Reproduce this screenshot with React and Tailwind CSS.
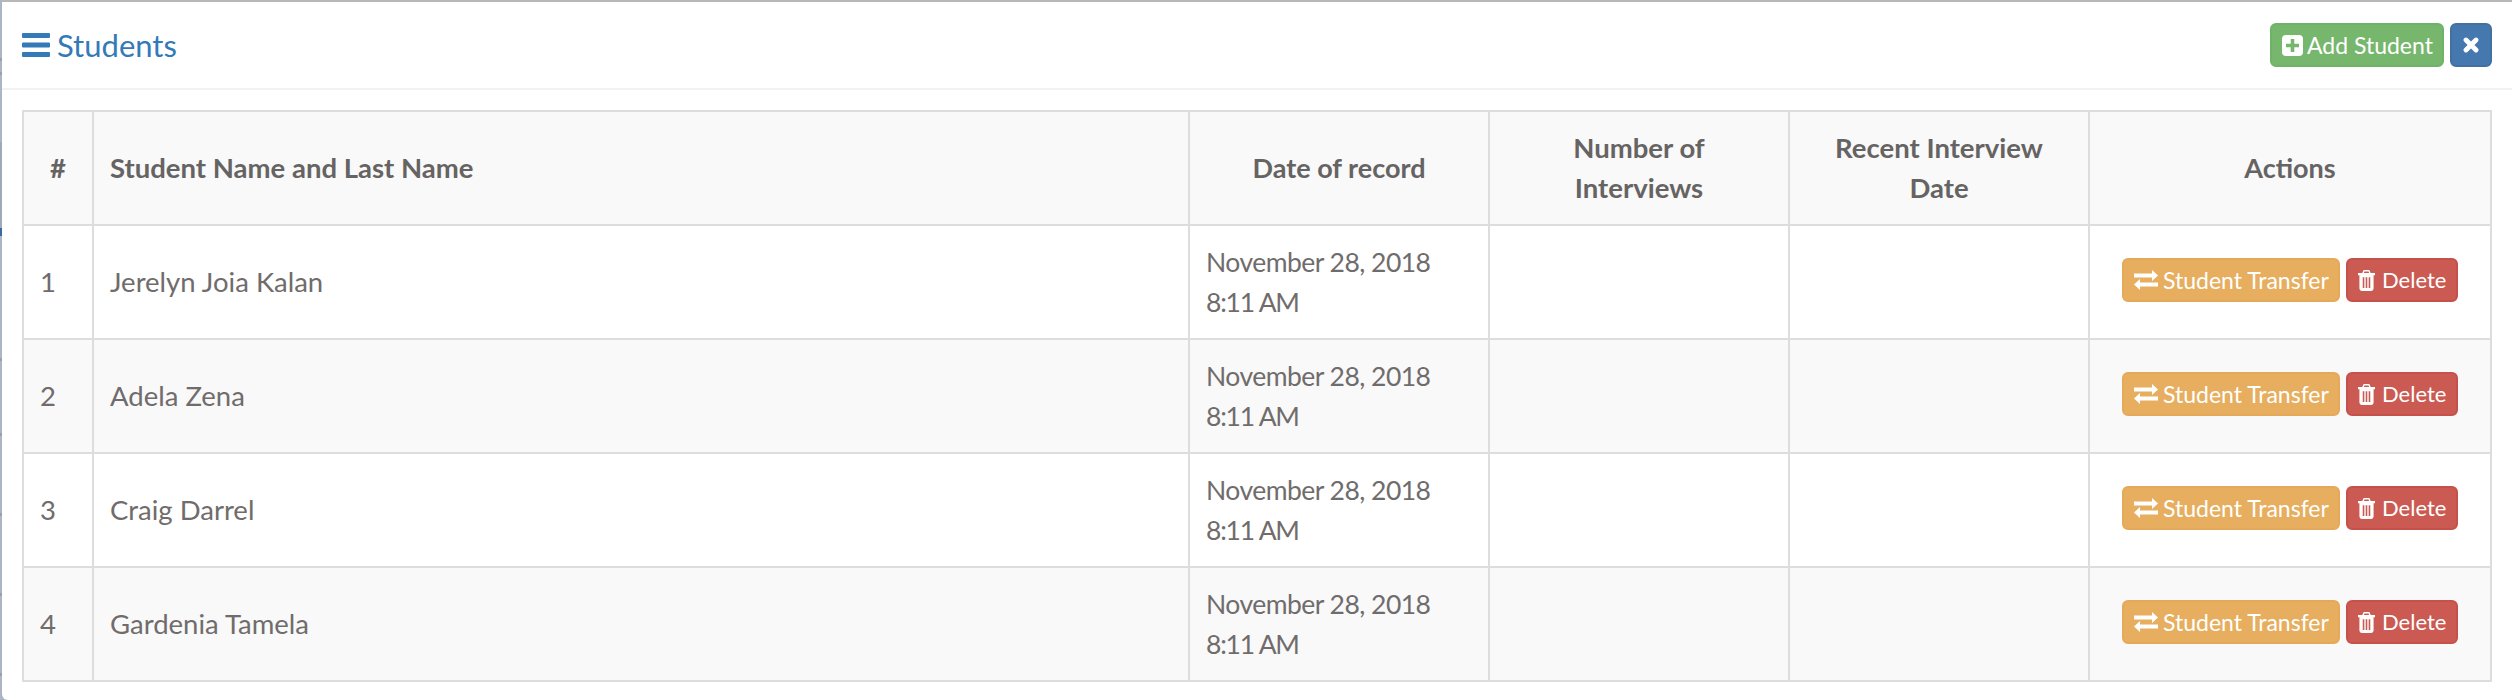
import React from "react";

const Bars = () => (
  <svg viewBox="0 0 28 24" className="w-[28px] h-[24px] shrink-0" fill="currentColor">
    <rect x="0" y="0" width="28" height="5" rx="1" />
    <rect x="0" y="9.500" width="28" height="5" rx="1" />
    <rect x="0" y="19" width="28" height="5" rx="1" />
  </svg>
);
const PlusSquare = () => (
  <svg viewBox="0 0 21 21" className="w-[21px] h-[21px] shrink-0">
    <path fill="currentColor" fillRule="evenodd" d="M4 0h13a4 4 0 0 1 4 4v13a4 4 0 0 1-4 4H4a4 4 0 0 1-4-4V4a4 4 0 0 1 4-4zM8.700 4v4.700H4v3.600h4.700V17h3.600v-4.700H17V8.700h-4.700V4z" />
  </svg>
);
const Times = () => (
  <svg viewBox="0 0 16 16" className="w-[16px] h-[16px]">
    <path d="M3 3l10 10M13 3L3 13" stroke="currentColor" strokeWidth="4.800" strokeLinecap="round" fill="none" />
  </svg>
);
const Exchange = () => (
  <svg viewBox="0 0 24 20" className="w-[24px] h-[20px] shrink-0" fill="currentColor">
    <path d="M0 3.500h18V0l6 5.500-6 5.500V7.500H0zM24 12.500v4H6V20l-6-5.500L6 9v3.500z" />
  </svg>
);
const Trash = () => (
  <svg viewBox="0 0 18 22" className="w-[17px] h-[21px] shrink-0" fill="currentColor">
    <path fillRule="evenodd" d="M6 0h6l1.500 3H18v2.500h-1.500v14A2.500 2.500 0 0 1 14 22H4a2.500 2.500 0 0 1-2.500-2.500v-14H0V3h4.500zM6.800 1.500L6.200 3h5.600l-.6-1.500zM5 7.500v11.500h1.700V7.500zM8.150 7.500v11.500h1.700V7.500zM11.300 7.500v11.500H13V7.500z" />
  </svg>
);

const rows = [
  ["1", "Jerelyn Joia Kalan"],
  ["2", "Adela Zena"],
  ["3", "Craig Darrel"],
  ["4", "Gardenia Tamela"],
];
const ticks = [358, 433, 513, 593, 673, 58, 72];

export default function App() {
  return (
    <div className="relative h-[700px] w-[2512px] overflow-hidden bg-[#abb5c4] font-['Lato','Noto_Sans',sans-serif] text-[27.5px] leading-[40px] text-[#706c6c]">
      <div className="absolute left-0 top-[142px] h-[86px] w-[2px] bg-[#9ea9ba]" />
      <div className="absolute left-0 top-[228px] h-[8px] w-[2px] bg-[#3a6a9e]" />
      {ticks.map((t) => (
        <div key={t} className="absolute left-0 h-[3px] w-[2px] bg-[#98a1ad]" style={{ top: t }} />
      ))}
      <div className="ml-[2px] h-[700px] rounded-bl-[6px] border-t-2 border-[#b8b8b8] bg-white">
        <div className="flex h-[88px] items-center justify-between border-b-2 border-[#f2f2f2] pl-[20px] pr-[18px]">
          <div className="flex items-center gap-[7px] text-[31px] text-[#337ab7]">
            <Bars />
            <span>Students</span>
          </div>
          <div className="mr-[2px] flex gap-[6px]">
            <button className="flex h-[44px] w-[174px] items-center gap-[4px] whitespace-nowrap rounded-[6px] border-2 border-[#6fb36b] bg-[#76b66d] px-[10px] text-[23px] text-white">
              <PlusSquare />
              <span>Add Student</span>
            </button>
            <button className="flex h-[44px] w-[42px] items-center justify-center rounded-[6px] border-2 border-[#42709f] bg-[#4678b0] text-white">
              <Times />
            </button>
          </div>
        </div>
        <div className="pl-[20px] pt-[20px]">
          <table className="w-[2468px] table-fixed border-collapse">
            <colgroup>
              <col className="w-[70px]" />
              <col className="w-[1096px]" />
              <col className="w-[300px]" />
              <col className="w-[300px]" />
              <col className="w-[300px]" />
              <col className="w-[402px]" />
            </colgroup>
            <thead>
              <tr className="bg-[#f9f9f9] font-bold text-[#666363]">
                <th className="h-[114px] border-2 border-[#dddddd] p-[16px] text-center">#</th>
                <th className="border-2 border-[#dddddd] p-[16px] text-left">Student Name and Last Name</th>
                <th className="border-2 border-[#dddddd] p-[16px] text-center text-[27px]">Date of record</th>
                <th className="border-2 border-[#dddddd] p-[16px] text-center">
                  Number of
                  <br />
                  Interviews
                </th>
                <th className="border-2 border-[#dddddd] p-[16px] text-center">
                  Recent Interview
                  <br />
                  Date
                </th>
                <th className="border-2 border-[#dddddd] p-[16px] text-center text-[27px]">Actions</th>
              </tr>
            </thead>
            <tbody>
              {rows.map(([n, name], i) => (
                <tr key={n} className={i % 2 ? "bg-[#f9f9f9]" : "bg-white"}>
                  <td className="h-[114px] border-2 border-[#dddddd] p-[16px]">{n}</td>
                  <td className="border-2 border-[#dddddd] p-[16px]">{name}</td>
                  <td className="border-2 border-[#dddddd] p-[16px] text-[26.500px] tracking-[-0.52px]">
                    November 28, 2018
                    <br />
                    <span className="tracking-[-1.2px]">8:11 AM</span>
                  </td>
                  <td className="border-2 border-[#dddddd] p-[16px]" />
                  <td className="border-2 border-[#dddddd] p-[16px]" />
                  <td className="border-2 border-[#dddddd] px-[16px] pb-[18px] pt-[14px]">
                    <div className="flex justify-center gap-[6px]">
                      <button className="flex h-[44px] w-[218px] items-center gap-[5px] whitespace-nowrap rounded-[6px] border-2 border-[#e5a95a] bg-[#e6ae5e] px-[10px] text-[23px] text-white">
                        <Exchange />
                        <span>Student Transfer</span>
                      </button>
                      <button className="flex h-[44px] w-[112px] items-center gap-[7px] whitespace-nowrap rounded-[6px] border-2 border-[#c5524a] bg-[#cb5a52] px-[10px] text-[22px] text-white">
                        <Trash />
                        <span>Delete</span>
                      </button>
                    </div>
                  </td>
                </tr>
              ))}
            </tbody>
          </table>
        </div>
      </div>
    </div>
  );
}
